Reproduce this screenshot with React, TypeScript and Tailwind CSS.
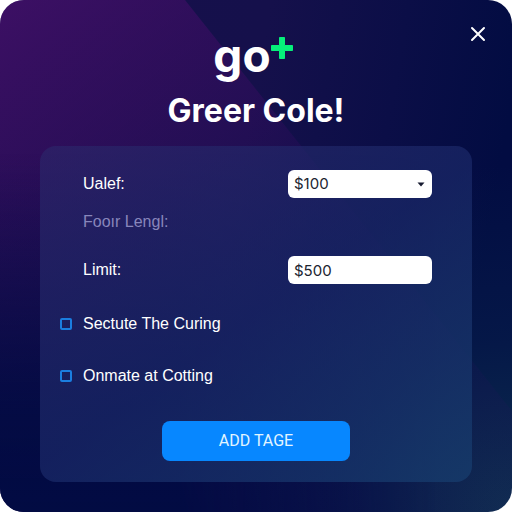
import React from "react";

function Row({ id, label, children }: { id?: string; label: string; children?: React.ReactNode }) {
  return (
    <div className="flex h-7 items-center justify-between">
      {children ? (
        <label htmlFor={id} className="text-white">{label}</label>
      ) : (
        <span className="text-[#8886bb]">{label}</span>
      )}
      {children}
    </div>
  );
}

function Check({ label }: { label: string }) {
  return (
    <label className="flex h-6 items-center gap-[11px] text-white">
      <input
        type="checkbox"
        className="size-3 shrink-0 appearance-none rounded-[2px] border-2 border-[#1b7ee0] checked:bg-[#1b7ee0]"
      />
      {label}
    </label>
  );
}

export default function App() {
  return (
    <div className="bg-white">
      <main
        role="dialog"
        aria-labelledby="title"
        className="relative isolate flex min-h-screen flex-col overflow-hidden rounded-3xl bg-[radial-gradient(circle_at_100%_100%,#0d3050_0%,rgba(6,28,74,0.7)_24%,rgba(2,12,66,0)_48%),linear-gradient(100deg,#16104c_0%,#15104b_45%,#0b0e47_68%,#020c42_88%)] px-10 pb-[30px] font-['Liberation_Sans',sans-serif] text-base leading-6"
      >
        <svg
          aria-hidden="true"
          viewBox="0 0 512 512"
          preserveAspectRatio="none"
          className="absolute inset-0 -z-10 h-full w-full"
        >
          <defs>
            <linearGradient id="beam" gradientUnits="userSpaceOnUse" x1="0" y1="0" x2="230" y2="300">
              <stop offset="0" stopColor="#5c0f78" stopOpacity="0.55" />
              <stop offset="0.45" stopColor="#4a0c6c" stopOpacity="0.42" />
              <stop offset="1" stopColor="#3a0a68" stopOpacity="0.1" />
            </linearGradient>
            <linearGradient id="floor" x1="0" y1="0" x2="0" y2="1">
              <stop offset="0.3" stopColor="#020b43" stopOpacity="0" />
              <stop offset="0.8" stopColor="#020b43" stopOpacity="0.9" />
              <stop offset="1" stopColor="#020b43" stopOpacity="1" />
            </linearGradient>
            <linearGradient id="fade" x1="0" y1="0" x2="1" y2="0">
              <stop offset="0.35" stopColor="#fff" />
              <stop offset="0.85" stopColor="#fff" stopOpacity="0" />
            </linearGradient>
            <mask id="left">
              <rect width="512" height="512" fill="url(#fade)" />
            </mask>
          </defs>
          <path d="M0 0H185L512 411V512H0Z" fill="url(#beam)" />
          <rect width="512" height="512" fill="url(#floor)" mask="url(#left)" />
        </svg>

        <button
          type="button"
          aria-label="Close"
          className="absolute top-[22px] right-[22px] flex size-6 items-center justify-center text-white"
        >
          <svg viewBox="0 0 24 24" className="size-6" fill="none" stroke="currentColor" strokeWidth="2" strokeLinecap="round">
            <path d="M6 6L18 18M18 6L6 18" />
          </svg>
        </button>

        <header className="flex flex-col items-center pt-7 font-['Inter',sans-serif] font-bold text-white">
          <div className="flex h-14 items-start pr-1.5 text-[46px] leading-[54px]">
            <span>go</span>
            <svg viewBox="0 0 22 22" className="mt-[9px] size-[22px]" role="img" aria-label="plus">
              <path d="M8.5 0.5h5v8h8v5h-8v8h-5v-8h-8v-5h8z" fill="#06f07a" stroke="#06f07a" strokeLinejoin="round" />
            </svg>
          </div>
          <h1 id="title" className="mt-1 text-[32px] leading-[46px]">Greer Cole!</h1>
        </header>

        <form
          onSubmit={(e) => e.preventDefault()}
          className="mt-3 flex flex-1 flex-col rounded-2xl bg-[linear-gradient(145deg,rgba(44,38,106,0.65),rgba(26,40,104,0.72)_50%,rgba(22,60,108,0.8))] px-5 pt-6 pb-[21px]"
        >
          <div className="flex flex-col pr-5 pl-[23px]">
            <Row id="amount" label="Ualef:">
              <div className="relative w-36">
                <select
                  id="amount"
                  className="block h-7 w-full appearance-none rounded-md bg-white px-1.5 font-['Inter',sans-serif] text-[15px] text-[#20242f]"
                >
                  <option>$100</option>
                </select>
                <svg viewBox="0 0 8 5" className="pointer-events-none absolute top-3 right-[7px] h-[5px] w-2" aria-hidden="true">
                  <path d="M0.5 0.5H7.5L4 4.5Z" fill="#161a30" />
                </svg>
              </div>
            </Row>
            <div className="mt-[10px] mb-5">
              <Row label="Fooır Lengl:" />
            </div>
            <Row id="limit" label="Limit:">
              <input
                id="limit"
                type="text"
                defaultValue="$500"
                className="h-7 w-36 rounded-md bg-white px-1.5 font-['Inter',sans-serif] text-[15px] text-[#20242f]"
              />
            </Row>
          </div>
          <div className="mt-7 flex flex-col items-start gap-7">
            <Check label="Sectute The Curing" />
            <Check label="Onmate at Cotting" />
          </div>
          <button
            type="submit"
            className="mx-auto mt-auto h-10 w-[188px] rounded-lg bg-[#0787ff] font-['Roboto',sans-serif] text-[#e2f5ff]"
          >
            ADD TAGE
          </button>
        </form>
      </main>
    </div>
  );
}
